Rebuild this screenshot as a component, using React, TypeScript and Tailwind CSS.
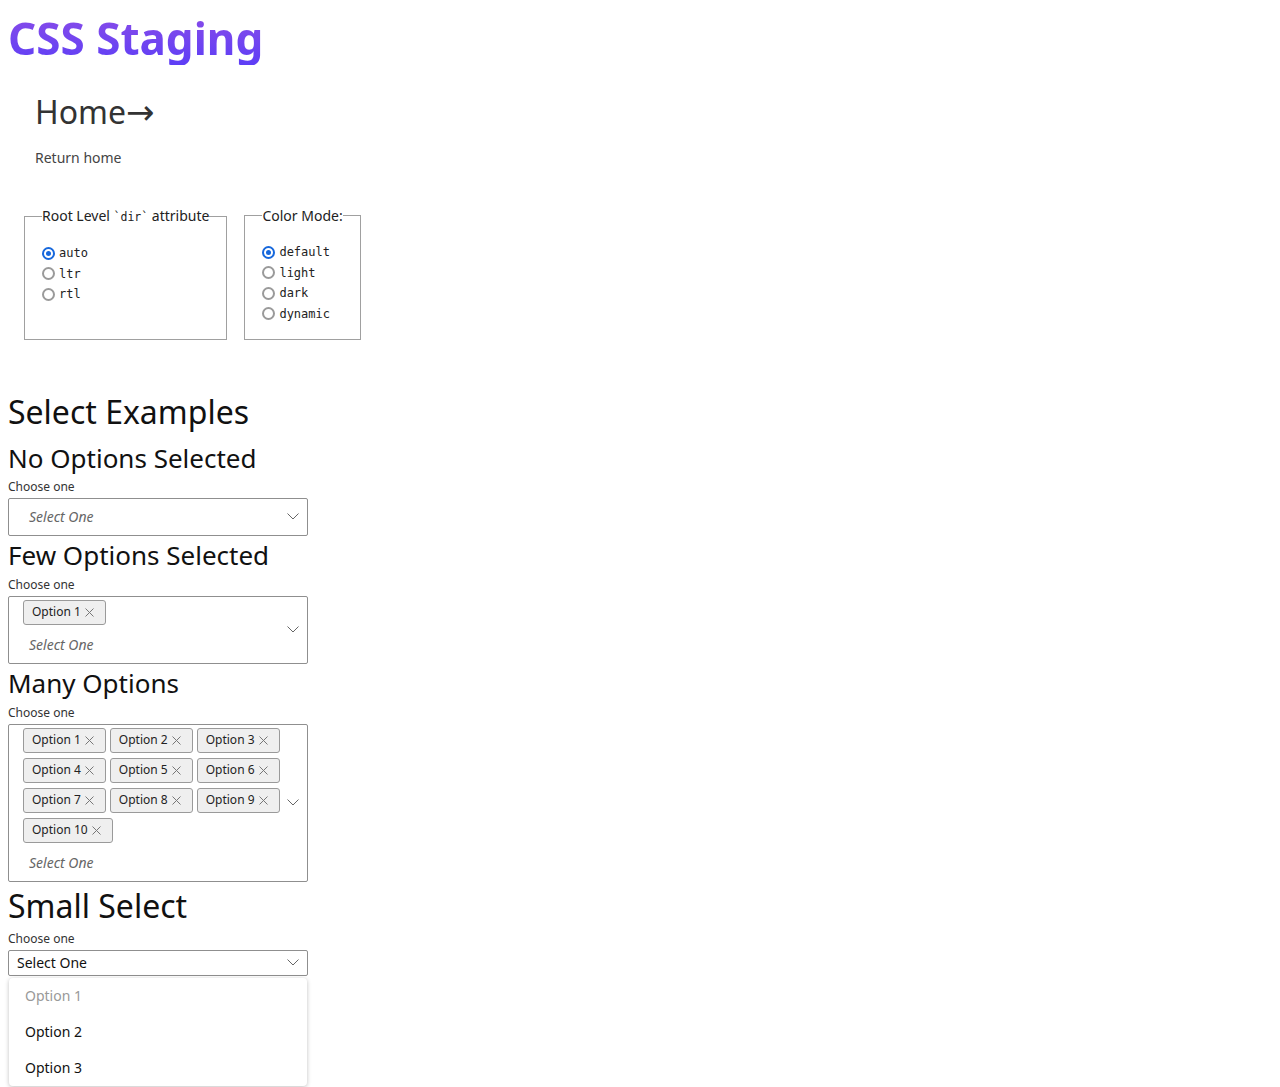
const Chevron = () => (
  <svg width="12" height="7" viewBox="0 0 12 7" fill="none" stroke="#666" strokeWidth="1">
    <path d="M0.5 0.5l5.5 5.5 5.5-5.5" />
  </svg>
);

const Chip = ({ label }: { label: string }) => (
  <span className="inline-flex items-center h-[25px] pl-[8px] pr-[11px] border border-[#9a9a9a] rounded-[3px] bg-[#efefef] text-[12px] text-[#222]">
    {label}
    <svg className="ml-[4px]" width="9" height="9" viewBox="0 0 9 9" stroke="#777" strokeWidth="1">
      <path d="M0.5 0.5l8 8M8.5 0.5l-8 8" />
    </svg>
  </span>
);

const MultiSelect = ({ chips }: { chips: string[] }) => (
  <div className="w-[300px] flex border border-[#8f8f8f] rounded-[2px]">
    <div className="flex-1 pl-[14px]">
      {chips.length > 0 && (
        <div className="flex flex-wrap gap-x-[4px] gap-y-[5px] pt-[3px] pb-[2px]">
          {chips.map((c) => (
            <Chip key={c} label={c} />
          ))}
        </div>
      )}
      <div className="h-[36px] flex items-center pl-[6px] italic text-[14px] text-[#666]">Select One</div>
    </div>
    <div className="w-[25px] pr-[3px] flex items-center justify-center">
      <Chevron />
    </div>
  </div>
);

const Label = () => <div className="text-[12px] leading-[16px] mb-[3px] text-[#333]">Choose one</div>;

const Radio = ({ name, value, checked }: { name: string; value: string; checked?: boolean }) => (
  <label className="flex items-center h-[20.5px] font-['DejaVu_Sans_Mono',monospace] text-[12px] text-[#222]" data-name={name}>
    {checked ? (
      <span className="w-[13px] h-[13px] mr-[4px] rounded-full border-2 border-[#1768dc] flex items-center justify-center">
        <span className="w-[5px] h-[5px] rounded-full bg-[#1768dc]" />
      </span>
    ) : (
      <span className="w-[13px] h-[13px] mr-[4px] rounded-full border-2 border-[#9a9a9a]" />
    )}
    {value}
  </label>
);

export default function App() {
  const many = Array.from({ length: 10 }, (_, i) => `Option ${i + 1}`);
  return (
    <div className="p-2 font-['Noto_Sans',sans-serif] text-[#111] bg-white">
      <h1 className="mt-[4px] text-[44px] leading-[1.2] font-bold bg-linear-to-b from-[#8a4be8] to-[#5d3df6] bg-clip-text text-transparent w-fit">
        CSS Staging
      </h1>

      <div className="pl-[27px]">
        <div className="mt-[25px] text-[32px] leading-[44px] h-[44px] text-[#333]">
          Home<span className="font-['DejaVu_Sans',sans-serif] text-[34px] leading-none">→</span>
        </div>
        <div className="mt-[14px] text-[14px] leading-[20px] text-[#444]">Return home</div>
      </div>

      <div className="flex gap-[17px] pl-[16px] mt-[38px]">
        <fieldset className="border border-[#a0a0a0] px-[17px] pt-[16px] pb-[15px]">
          <legend className="text-[14px] leading-[20px] text-[#222]">
            Root Level <span className="font-['DejaVu_Sans_Mono',monospace] text-[11.5px]">`dir`</span> attribute
          </legend>
          <Radio name="dir" value="auto" checked />
          <Radio name="dir" value="ltr" />
          <Radio name="dir" value="rtl" />
        </fieldset>
        <fieldset className="border border-[#a0a0a0] px-[17px] pt-[16px] pb-[15px]">
          <legend className="text-[14px] leading-[20px] text-[#222]">Color Mode:</legend>
          <Radio name="mode" value="default" checked />
          <Radio name="mode" value="light" />
          <Radio name="mode" value="dark" />
          <Radio name="mode" value="dynamic" />
        </fieldset>
      </div>

      <h1 className="mt-[52px] text-[32px] leading-[40px]">Select Examples</h1>

      <h2 className="mt-[10px] text-[26px] leading-[32px] mb-[5px]">No Options Selected</h2>
      <Label />
      <MultiSelect chips={[]} />

      <h2 className="mt-[3px] text-[26px] leading-[32px] mb-[6px]">Few Options Selected</h2>
      <Label />
      <MultiSelect chips={["Option 1"]} />

      <h2 className="mt-[3px] text-[26px] leading-[32px] mb-[6px]">Many Options</h2>
      <Label />
      <MultiSelect chips={many} />

      <h1 className="text-[32px] mb-[1px]">Small Select</h1>
      <Label />
      <div className="w-[300px]">
        <div className="h-[26px] flex items-center pl-[8px] pr-[8px] border border-[#8f8f8f] rounded-[2px] text-[14px] text-[#111]">
          <span className="flex-1">Select One</span>
          <Chevron />
        </div>
        <div className="mt-[2px] mx-[1px] bg-white rounded-[4px] shadow-[0_1px_4px_rgba(0,0,0,0.25)] text-[14px]">
          <div className="h-[36px] flex items-center pl-[16px] text-[#999]">Option 1</div>
          <div className="h-[36px] flex items-center pl-[16px] text-[#111]">Option 2</div>
          <div className="h-[36px] flex items-center pl-[16px] text-[#111]">Option 3</div>
        </div>
      </div>
    </div>
  );
}
